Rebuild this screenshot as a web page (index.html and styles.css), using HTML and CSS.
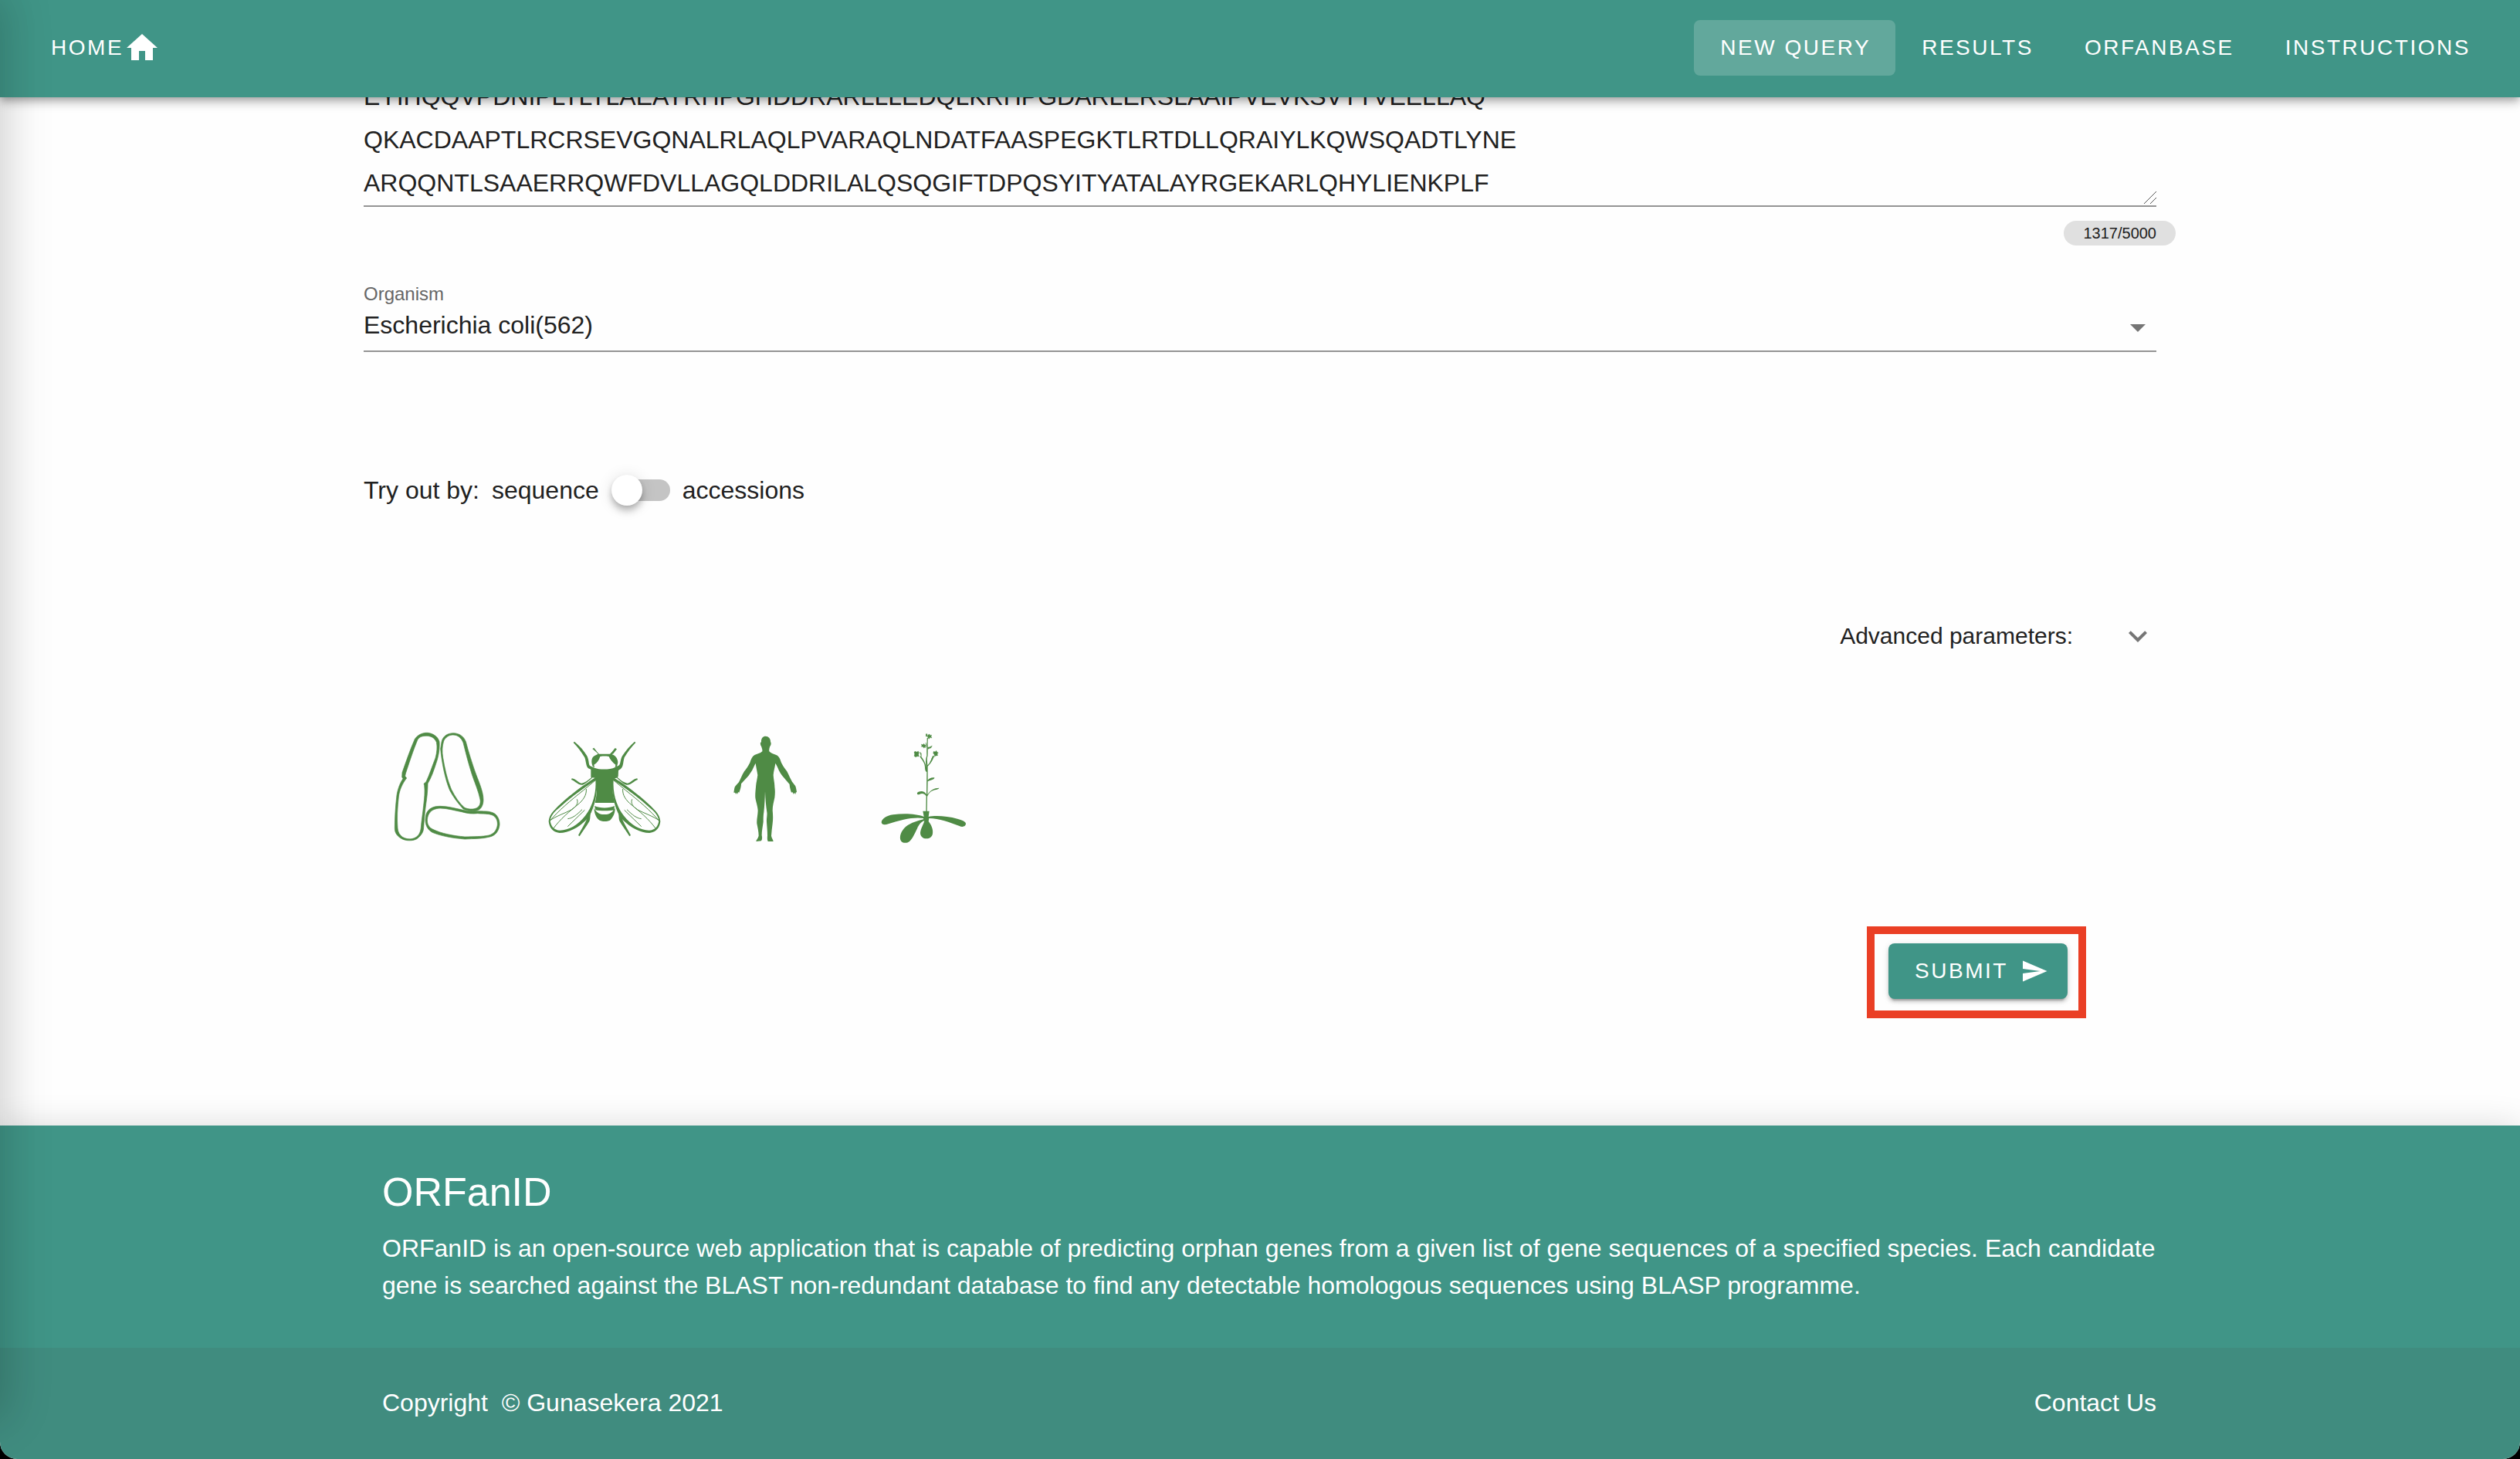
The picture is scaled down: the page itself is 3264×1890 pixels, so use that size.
FILE: index.html
```html
<!DOCTYPE html>
<html lang="en">
<head>
<meta charset="utf-8">
<title>ORFanID</title>
<link rel="stylesheet" href="styles.css">
</head>
<body>
<div class="app">
  <header class="toolbar">
    <a class="btn" href="#home">Home
      <svg class="icon" viewBox="0 0 24 24" aria-hidden="true"><path d="M10,20V14H14V20H19V12H22L12,3L2,12H5V20H10Z"/></svg>
    </a>
    <nav class="menu">
      <a class="btn active" href="#query">New Query</a>
      <a class="btn" href="#results">Results</a>
      <a class="btn" href="#orfanbase">Orfanbase</a>
      <a class="btn" href="#instructions">Instructions</a>
    </nav>
  </header>

  <main class="content">
    <form class="container">
      <div class="sequence-wrap">
        <textarea class="sequence" rows="3" aria-label="Gene sequence" spellcheck="false">EYIHQQVPDNIPLTLTLAEAYRHPGHDDRARLLLEDQLKRHPGDARLERSLAAIPVEVKSVTTVEELLAQ
QKACDAAPTLRCRSEVGQNALRLAQLPVARAQLNDATFAASPEGKTLRTDLLQRAIYLKQWSQADTLYNE
ARQQNTLSAAERRQWFDVLLAGQLDDRILALQSQGIFTDPQSYITYATALAYRGEKARLQHYLIENKPLF</textarea>
        <svg class="grip" viewBox="0 0 16 16" aria-hidden="true"><path d="M0 16L16 0M8 16L16 8"/></svg>
      </div>
      <div class="counter"><span class="chip">1317/5000</span></div>

      <div class="field">
        <label class="field-label" for="organism">Organism</label>
        <div class="select-wrap">
          <select id="organism" class="select"><option>Escherichia coli(562)</option></select>
          <svg class="icon arrow" viewBox="0 0 24 24" aria-hidden="true"><path d="M7,10L12,15L17,10H7Z"/></svg>
        </div>
      </div>

      <div class="try-out">
        <span>Try out by:</span>
        <label for="mode">sequence</label>
        <input id="mode" class="switch" type="checkbox" role="switch">
        <label for="mode">accessions</label>
      </div>

      <button class="advanced" type="button">
        <span>Advanced parameters:</span>
        <svg class="icon" viewBox="0 0 24 24" aria-hidden="true"><path d="M7.41,8.58L12,13.17L16.59,8.58L18,10L12,16L6,10L7.41,8.58Z"/></svg>
      </button>

      <div class="organisms">
        <button class="organism" type="button" aria-label="Bacteria">
          <svg viewBox="-27 0 624 600" stroke="currentColor" stroke-width="2" aria-hidden="true">
            <path fill-rule="evenodd" d="M172,112C186,92 206,87 222,88C244,90 262,104 267,122C269,150 264,180 254,208C244,238 236,262 222,285C222,320 217,350 214,372C210,400 208,430 206,456C206,476 192,492 178,501C162,509 136,508 122,500C106,492 94,478 94,460C94,420 97,370 102,330C106,304 116,280 126,266L122,260L123,242C138,200 154,152 172,112ZM182,116C166,154 150,204 136,246L134,256L140,264C124,284 112,310 109,336C104,380 102,420 105,458C106,474 114,486 124,493C138,502 160,503 174,495C188,488 194,474 196,456C198,430 203,400 206,370C209,344 212,318 209,292L207,286L216,278C230,248 240,216 252,186C258,164 260,142 256,124C248,106 232,100 218,100C202,100 190,102 182,116Z"/>
            <path fill-rule="evenodd" d="M276,124C280,100 300,89 322,89C346,90 362,102 370,122C380,160 394,206 410,250C422,282 438,318 438,348C438,370 428,388 412,390C392,394 372,390 360,384C338,360 322,338 308,312C290,270 276,200 272,150ZM284,120C278,140 277,160 281,184C288,226 298,272 314,308C328,336 344,360 364,378C380,386 400,386 412,380C424,374 428,362 426,348C420,316 404,280 394,250C380,206 370,166 360,126C352,106 338,96 320,96C304,96 290,106 284,120Z"/>
            <path fill-rule="evenodd" d="M216,404C224,382 244,373 270,373C300,373 330,382 356,387C374,392 392,394 408,392C436,393 464,390 482,402C496,412 502,430 501,446C498,470 486,486 464,492C436,500 400,499 366,501C320,497 276,490 240,475C216,462 208,434 216,404ZM224,408C216,430 220,452 240,462C276,480 322,488 366,492C400,491 434,492 460,486C480,480 490,466 493,446C494,428 488,416 474,408C456,400 436,404 416,401C396,404 374,401 354,395C326,390 298,381 270,381C248,382 232,390 224,408Z"/>
          </svg>
        </button>
        <button class="organism" type="button" aria-label="Fruit fly">
          <svg viewBox="597 0 624 600" aria-hidden="true">
            <path d="M856,230L846,226C836,216 838,200 832,184C818,160 804,142 788,126L792,122C812,138 830,158 841,178C850,196 846,208 852,216L870,224C890,232 930,232 950,222L966,214C972,206 970,192 978,178C990,158 1008,138 1026,122L1030,126C1014,142 1000,160 986,184C980,204 984,216 972,228L963,234L962,258C952,268 944,262 940,272C938,300 940,320 948,360H872C880,330 880,300 878,272L874,264L856,260Z"/>
            <path d="M864,220C858,206 856,190 866,180C874,174 880,172 884,170L876,162L862,150L868,146L882,164L888,170H930L938,162L950,147L957,151L944,168L938,172C950,176 960,186 961,202C960,210 958,216 956,220L950,222L952,212C940,204 930,190 926,180C912,178 906,178 892,180C888,194 880,206 868,212L870,222Z"/>
            <g id="fly-side">
              <path fill-rule="evenodd" d="M874,262C820,294 756,344 716,386C702,400 694,412 692,432C694,454 706,474 734,477C770,476 808,456 836,428C862,400 882,350 880,266ZM874,272C878,330 858,380 834,410C806,446 770,466 736,467C712,466 700,450 698,428C702,408 714,394 732,380C780,336 832,300 874,272Z"/>
              <path d="M874,272L826,312C778,350 728,392 697,430M838,306C840,330 826,350 804,368C776,390 736,424 710,460M802,346C808,360 800,374 782,386C756,400 720,412 698,428M832,388L766,452M822,386C800,408 784,420 766,422" fill="none" stroke="currentColor" stroke-width="3"/>
              <path d="M864,260C846,276 836,286 824,290C806,292 796,276 780,270L782,265C800,268 806,282 820,284C838,280 846,272 864,256ZM860,392C850,404 856,420 850,432C838,452 824,470 812,490L807,486C818,464 830,446 838,428L842,410Z"/>
            </g>
            <use href="#fly-side" transform="translate(1818 0) scale(-1 1)"/>
            <path d="M870,372C890,382 928,382 948,372L946,388C930,392 890,392 874,388ZM868,380C880,402 896,406 908,405C922,406 936,402 950,380C950,404 940,418 930,428C918,433 902,433 890,428C876,418 870,402 868,380Z"/>
          </svg>
        </button>
        <button class="organism" type="button" aria-label="Human">
          <svg viewBox="-39 0 624 600" aria-hidden="true">
            <path d="M275,101C286,101 294,110 294,122L296,128C296,134 294,138 292,140C290,146 288,152 289,160C296,168 308,170 318,175C328,180 332,192 336,204C342,216 350,228 358,238C366,254 372,268 378,278C386,288 392,294 393,302L396,318L392,320L391,327L386,320L384,327L379,318L375,320C372,312 368,298 368,288C354,270 340,258 332,244C324,230 320,216 313,206C311,222 306,236 305,252C306,270 310,282 310,298C312,312 312,324 310,340C306,360 302,372 302,390C304,412 304,424 302,440C300,456 298,472 297,488C298,496 304,502 305,510H284C280,502 282,494 282,486C282,468 280,450 279,434C278,420 282,408 280,396C276,370 274,344 273,316C272,344 271,370 268,396C266,408 266,420 266,434C264,450 260,468 260,486C262,494 262,502 258,508L238,510C238,504 246,498 248,488C248,472 244,456 241,440C240,424 244,412 245,390C244,372 238,360 235,340C234,324 236,312 237,298C238,282 242,270 244,252C242,236 238,222 236,206C230,216 226,230 216,244C208,258 194,270 180,286C180,298 176,310 172,320L168,318L166,326L162,320L160,327L156,320L151,320L154,302C156,294 164,288 171,280C178,268 182,254 192,238C200,228 208,216 214,204C218,192 222,180 232,174C242,170 254,168 262,160C263,152 260,146 258,140C255,136 254,132 255,126L258,124C257,110 264,101 275,101Z"/>
          </svg>
        </button>
        <button class="organism" type="button" aria-label="Plant">
          <svg viewBox="585 0 624 600" aria-hidden="true">
            <path d="M886,392H911L908,414C930,408 980,410 1020,422C1042,428 1054,434 1053,442C1052,452 1040,456 1028,450C990,436 950,420 910,420L908,432C922,450 926,466 924,480C922,492 912,499 900,499C886,499 876,490 876,476C878,458 888,446 892,430C878,434 870,446 864,460C854,480 846,500 834,510C824,518 806,518 800,506C794,492 800,470 820,452C842,436 866,430 888,424V420C850,414 800,426 752,442C738,447 726,446 725,436C726,422 744,410 770,406C812,400 860,402 890,414Z"/>
            <path d="M898,394L899,334C892,324 884,322 874,326C868,330 862,328 864,321C874,313 892,312 900,328L901,240C892,236 896,224 892,210C888,198 880,190 874,180L878,178C888,190 896,204 900,224C896,206 896,190 901,176C900,150 902,130 902,108H906C904,130 906,150 905,176C900,190 904,204 904,214C914,206 918,192 924,178L930,176C926,190 920,204 905,218V272C910,264 920,260 931,262C932,270 918,270 905,277L904,328C914,312 930,302 949,302C950,310 930,308 918,316C910,322 906,330 903,336L902,394Z"/>
            <path d="M898,92H903V102H898ZM906,96L912,93L914,98L920,96L918,102L921,108L914,106L910,112L906,108L904,102ZM880,132L886,134L890,130L894,136L898,134L896,142L890,147L886,142L880,142L882,138ZM852,162L858,160L862,163L868,159L871,166L869,172L871,180L864,179L858,182L852,178L854,171ZM928,160L934,162L938,157L941,163L946,165L942,170L944,176L937,177L932,179L930,172L926,167ZM905,144L912,143L922,138L918,146L908,150L905,152ZM874,162L880,168V180L877,172ZM897,126L901,136L900,140Z" stroke="currentColor" stroke-width="1"/>
            <path d="M918,190L932,180M894,146L902,140M915,200L924,190" fill="none" stroke="currentColor" stroke-width="2"/>
          </svg>
        </button>
      </div>

      <div class="actions">
        <div class="highlight">
          <button class="submit" type="submit">Submit
            <svg viewBox="0 0 24 24" aria-hidden="true"><path d="M2,21L23,12L2,3V10L17,12L2,14V21Z"/></svg>
          </button>
        </div>
      </div>
    </form>
  </main>

  <footer class="footer">
    <div class="about">
      <h5 class="title">ORFanID</h5>
      <p class="summary">ORFanID is an open-source web application that is capable of predicting orphan genes from a given list of gene sequences of a specified species. Each candidate gene is searched against the BLAST non-redundant database to find any detectable homologous sequences using BLASP programme.</p>
    </div>
    <div class="legal">
      <span>Copyright &nbsp;© Gunasekera 2021</span>
      <a class="contact" href="#contact">Contact Us</a>
    </div>
  </footer>
  <div class="drawer" aria-hidden="true"></div>
</div>
</body>
</html>
```
FILE: styles.css
```css
:root {
  --teal: #409587;
  --teal-dark: #408c7f;
  --green: #4f8b45;
  --ink: #212121;
  --line: #949494;
  --gutter: max(24px, calc((100% - 2322px) / 2));
}

* {
  box-sizing: border-box;
}

html {
  background: #000;
}

body {
  margin: 0;
  font: 32px/48px "Liberation Sans", Arial, Helvetica, sans-serif;
  color: var(--ink);
}

button,
select,
textarea {
  font: inherit;
  color: inherit;
  border: 0;
  background: none;
  padding: 0;
}

svg {
  display: block;
  fill: currentColor;
}

.app {
  position: relative;
  display: flex;
  flex-direction: column;
  min-height: 100vh;
  background: #fefefe;
  border-radius: 0 0 22px 22px;
  overflow: clip;
}

.icon {
  width: 48px;
  height: 48px;
}

/* Toolbar */
.toolbar {
  position: sticky;
  top: 0;
  z-index: 2;
  display: flex;
  justify-content: space-between;
  padding: 26px 32px 28px;
  background: var(--teal);
  box-shadow: 0 4px 8px -2px rgba(0, 0, 0, .2), 0 8px 10px rgba(0, 0, 0, .14), 0 2px 20px rgba(0, 0, 0, .12);
}

.menu {
  display: flex;
}

.btn {
  display: flex;
  align-items: center;
  height: 72px;
  padding: 0 32px 0 34px;
  border-radius: 8px;
  color: #fff;
  font-size: 28px;
  letter-spacing: .09em;
  text-transform: uppercase;
  text-decoration: none;
}

.btn.active {
  background: rgba(255, 255, 255, .18);
}

/* Query form */
.content {
  flex: 1;
  margin-top: -29px;
  padding: 0 var(--gutter) 139px;
}

.container {
  display: flex;
  flex-direction: column;
}

.sequence-wrap {
  display: grid;
  border-bottom: 2px solid var(--line);
}

.sequence {
  grid-area: 1 / 1;
  width: 100%;
  height: 169px;
  line-height: 56px;
  white-space: pre;
  overflow: hidden;
  resize: none;
  outline: 0;
}

.grip {
  grid-area: 1 / 1;
  place-self: end;
  width: 16px;
  height: 16px;
  margin-bottom: 2px;
  stroke: #555;
  stroke-width: 1;
  pointer-events: none;
}

.counter {
  display: flex;
  justify-content: flex-end;
  margin: 18px -25px 51px 0;
}

.chip {
  padding: 0 25px;
  border-radius: 16px;
  background: #e0e0e0;
  font-size: 20px;
  line-height: 32px;
}

.field-label {
  display: block;
  color: #666;
  font-size: 24px;
  line-height: 24px;
}

.select-wrap {
  display: grid;
  align-items: center;
  border-bottom: 2px solid var(--line);
  margin-bottom: 155px;
}

.select {
  grid-area: 1 / 1;
  width: 100%;
  height: 61px;
  padding-bottom: 5px;
  appearance: none;
}

.arrow {
  grid-area: 1 / 1;
  justify-self: end;
  color: #757575;
  pointer-events: none;
}

.try-out {
  display: flex;
  align-items: center;
  gap: 16px;
}

.switch {
  appearance: none;
  width: 73px;
  height: 28px;
  margin: 0 0 0 3px;
  border-radius: 14px;
  background: #c4c4c4;
}

.switch::before {
  content: "";
  display: block;
  width: 40px;
  height: 40px;
  margin: -6px 0 0 -3px;
  border-radius: 50%;
  background: #fff;
  box-shadow: 0 4px 8px -2px rgba(0, 0, 0, .2), 0 8px 10px rgba(0, 0, 0, .14), 0 2px 20px rgba(0, 0, 0, .12);
}

.switch:checked::before {
  margin-left: 36px;
}

.advanced {
  align-self: flex-end;
  display: flex;
  align-items: center;
  gap: 60px;
  margin: 141px 0 72px;
  font-size: 30px;
  line-height: 48px;
}

.advanced .icon {
  color: #757575;
}

.organisms {
  display: flex;
}

.organism {
  width: 208px;
  height: 200px;
  color: var(--green);
}

.actions {
  display: flex;
  justify-content: flex-end;
  margin: 80px 91px 0 0;
}

.highlight {
  padding: 12px 14px 15px 18px;
  border: 10px solid #ea3f25;
}

.submit {
  display: flex;
  align-items: center;
  gap: 16px;
  height: 72px;
  padding: 0 25px 0 34px;
  border-radius: 8px;
  background: var(--teal);
  box-shadow: 0 6px 2px -4px rgba(0, 0, 0, .2), 0 4px 4px rgba(0, 0, 0, .14), 0 2px 10px rgba(0, 0, 0, .12);
  color: #fff;
  font-size: 28px;
  letter-spacing: .09em;
  text-transform: uppercase;
}

.submit svg {
  width: 36px;
  height: 36px;
}

/* Footer */
.footer {
  color: #fff;
  box-shadow: 0 0 40px rgba(0, 0, 0, .14);
}

.about,
.legal {
  padding-left: calc(var(--gutter) + 24px);
  padding-right: var(--gutter);
}

.about {
  padding-top: 54px;
  padding-bottom: 57px;
  background: var(--teal);
}

.title {
  margin: 0 0 17px;
  font-size: 52px;
  font-weight: 400;
  line-height: 64px;
}

.summary {
  margin: 0;
}

.legal {
  display: flex;
  justify-content: space-between;
  padding-top: 47px;
  padding-bottom: 49px;
  background: var(--teal-dark);
}

.contact {
  color: inherit;
  text-decoration: none;
}

/* Closed side drawer: only its shadow reaches the page */
.drawer {
  position: absolute;
  z-index: 3;
  top: 0;
  bottom: 60px;
  left: -512px;
  width: 512px;
  box-shadow: 0 0 60px 10px rgba(0, 0, 0, .12), 0 0 48px 4px rgba(0, 0, 0, .08);
  pointer-events: none;
}
```
